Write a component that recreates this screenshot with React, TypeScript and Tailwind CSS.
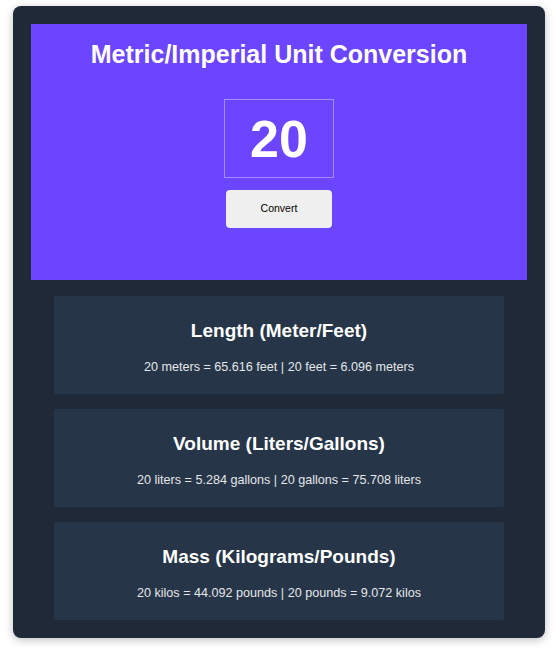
import React from "react";

const cards = [
  { title: "Length (Meter/Feet)", text: "20 meters = 65.616 feet | 20 feet = 6.096 meters" },
  { title: "Volume (Liters/Gallons)", text: "20 liters = 5.284 gallons | 20 gallons = 75.708 liters" },
  { title: "Mass (Kilograms/Pounds)", text: "20 kilos = 44.092 pounds | 20 pounds = 9.072 kilos" },
];

export default function App() {
  return (
    <div className="w-[556px] h-[648px] bg-white pt-[6px] px-[13px]" style={{ fontFamily: '"Liberation Sans", Arial, sans-serif' }}>
      <div className="w-[532px] h-[632px] bg-[#1f2937] rounded-[8px] shadow-[0_2px_8px_rgba(0,0,0,0.25)] p-[18px] flex flex-col">
        <div className="h-[256px] bg-[#6b45ff] flex flex-col items-center pt-[15px]">
          <h1 className="text-white font-bold text-[25px] leading-[30px]">Metric/Imperial Unit Conversion</h1>
          <div className="mt-[30px] w-[110px] h-[79px] border border-[#a38cff] flex items-center justify-center">
            <span className="text-white font-bold text-[52px] leading-none">20</span>
          </div>
          <button className="mt-[12px] w-[106px] h-[38px] bg-[#efefef] rounded-[4px] text-[10.5px] text-black">Convert</button>
        </div>
        <div className="flex flex-col items-center gap-[15px] mt-[16px]">
          {cards.map((c) => (
            <div key={c.title} className="w-[450px] h-[98px] bg-[#263547] rounded-[2px] flex flex-col items-center pt-[23px]">
              <h2 className="text-white font-bold text-[19px] leading-[24px]">{c.title}</h2>
              <p className="text-[#e5e7eb] text-[12.6px] leading-[16px] mt-[16px]">{c.text}</p>
            </div>
          ))}
        </div>
      </div>
    </div>
  );
}
